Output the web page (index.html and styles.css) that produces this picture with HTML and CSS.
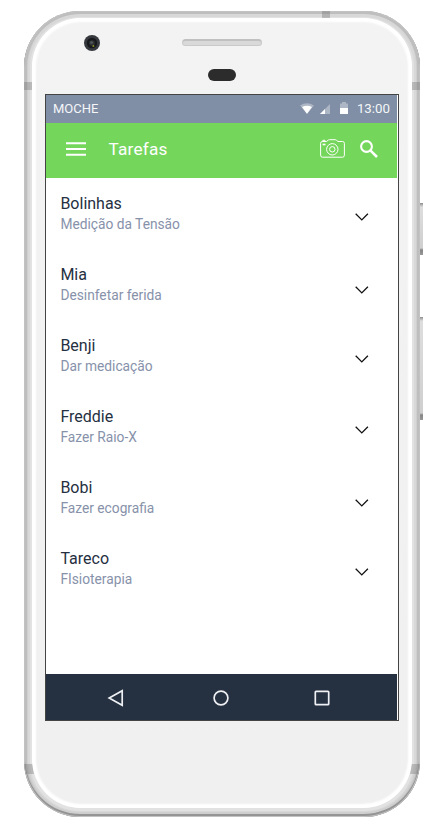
FILE: index.html
```html
<!DOCTYPE html>
<html lang="pt">
<head>
<meta charset="utf-8">
<title>Tarefas</title>
<link rel="stylesheet" href="styles.css">
</head>
<body>
<div class="phone">
  <i class="key key-power"></i><i class="key key-volume"></i>
  <i class="band band-top"></i><i class="band band-tl"></i><i class="band band-tr"></i><i class="band band-bl"></i><i class="band band-br"></i>
  <div class="face">
    <div class="hardware">
      <svg class="lens" viewBox="0 0 16 16"><circle cx="8" cy="8" r="8" fill="#35393d"/><circle cx="8" cy="8" r="5.2" fill="#17191c"/><circle cx="8" cy="8" r="2.8" fill="#303435"/><circle cx="7.5" cy="7.5" r="1.3" fill="#555b5f"/><circle cx="9.4" cy="11" r="1" fill="#858b27"/></svg>
      <i class="speaker"></i>
      <i class="sensor"></i>
    </div>
    <div class="screen">
      <div class="status">
        <span class="carrier">MOCHE</span>
        <svg class="wifi" viewBox="0 0 14 11"><path d="M0 2.6Q7-2 14 2.6L7 11Z" fill="#fff" opacity=".35"/><path d="M2 4.1Q7 1.4 12 4.1L7 10.8Z" fill="#fff"/></svg>
        <svg class="signal" viewBox="0 0 10 10"><path d="M10 0V10H0Z" fill="#fff" opacity=".35"/><path d="M5 5V10H0Z" fill="#fff"/></svg>
        <svg class="battery" viewBox="0 0 8 12"><path d="M0 1.4H2V0H6V1.4H8V6H0Z" fill="#fff" opacity=".35"/><path d="M0 6H8V12H0Z" fill="#fff"/></svg>
        <span class="time">13:00</span>
      </div>
      <header class="bar">
        <svg class="menu" viewBox="0 0 20 14"><path d="M0 1.2H20M0 7H20M0 12.8H20" stroke="#fff" stroke-width="2.1"/></svg>
        <h1>Tarefas</h1>
        <svg class="camera" viewBox="0 0 25 19" fill="none" stroke="#fff"><path d="M2.5 2.5H6.5L8.2 1.2Q8.8.7 9.6.7H15Q15.8.7 16.4 1.2L18 2.5H22.5Q24.4 2.5 24.4 4.4V16.2Q24.4 18.2 22.5 18.2H2.5Q.6 18.2.6 16.2V4.4Q.6 2.5 2.5 2.5ZM2.8 2.4V1.3H5V2.4"/><circle cx="12.3" cy="10.3" r="5.7"/><circle cx="12.3" cy="10.3" r="2.7"/><path d="M2.6 5.5H5.5" stroke-width="1.6"/></svg>
        <svg class="search" viewBox="0 0 18 18" fill="none" stroke="#fff"><circle cx="6.5" cy="6.5" r="5.4" stroke-width="2.1"/><path d="M10.6 10.6L17 17" stroke-width="2.5"/></svg>
      </header>
      <ul class="tasks">
        <li><div><h2>Bolinhas</h2><p>Medição da Tensão</p></div><svg class="chevron" viewBox="0 0 14 8"><path d="M.7.7L6.8 6.9L12.9.7"/></svg></li>
        <li><div><h2>Mia</h2><p>Desinfetar ferida</p></div><svg class="chevron low" viewBox="0 0 14 8"><path d="M.7.7L6.8 6.9L12.9.7"/></svg></li>
        <li><div><h2>Benji</h2><p>Dar medicação</p></div><svg class="chevron" viewBox="0 0 14 8"><path d="M.7.7L6.8 6.9L12.9.7"/></svg></li>
        <li><div><h2>Freddie</h2><p>Fazer Raio-X</p></div><svg class="chevron" viewBox="0 0 14 8"><path d="M.7.7L6.8 6.9L12.9.7"/></svg></li>
        <li><div><h2>Bobi</h2><p>Fazer ecografia</p></div><svg class="chevron low" viewBox="0 0 14 8"><path d="M.7.7L6.8 6.9L12.9.7"/></svg></li>
        <li><div><h2>Tareco</h2><p>FIsioterapia</p></div><svg class="chevron" viewBox="0 0 14 8"><path d="M.7.7L6.8 6.9L12.9.7"/></svg></li>
      </ul>
      <nav class="nav">
        <svg viewBox="0 0 18 18"><path d="M15.2 1.8V16.2L2.2 9Z"/></svg>
        <svg class="home" viewBox="0 0 18 18"><circle cx="9" cy="9" r="6.9"/></svg>
        <svg viewBox="0 0 18 18"><rect x="2.3" y="2.3" width="13.4" height="13.4" rx=".8"/></svg>
      </nav>
    </div>
  </div>
</div>
</body>
</html>
```
FILE: styles.css
```css
* { box-sizing: border-box; }
body {
  margin: 0;
  height: 827px;
  padding: 11px 13px 0 24px;
  overflow: hidden;
  background: #fff;
  font-family: Roboto, sans-serif;
}
h1, h2, p, ul { margin: 0; padding: 0; font-weight: 400; }
svg { display: block; flex: none; }

.phone {
  position: relative;
  width: 396px;
  height: 806px;
  padding: 7px 8px 9px;
  border-radius: 56px;
  background: #e2e2e2;
  box-shadow: inset 0 0 0 1px #c2c2c2, inset 0 -2px 0 1px #949494, inset 0 0 0 3px #bebebe, inset 0 -1px 0 4px #cfcfcf, inset 0 0 0 6px #d8d8d8;
}
.face {
  height: 790px;
  padding: 0 13px;
  border-radius: 49px;
  background: linear-gradient(#f3f3f3, #f0f0f0);
  box-shadow: inset 0 0 2px 4px #fff;
}
.band { position: absolute; background: rgba(110, 110, 110, .35); width: 8px; height: 8px; }
.band-top { left: 298px; top: 0; height: 7px; }
.band-tl { left: 0; top: 71px; }
.band-tr { right: 0; top: 71px; }
.band-bl { left: 1px; top: 753px; width: 8px; height: 10px; transform: skewX(10deg); }
.band-br { right: 1px; top: 753px; width: 8px; height: 10px; transform: skewX(-10deg); }
.key {
  position: absolute;
  left: 396px;
  width: 3px;
  background: linear-gradient(#8d8d8d, #dedede 4px, #cfcfcf calc(100% - 7px), #858585 calc(100% - 5px), #999);
}
.key-power { top: 192px; height: 52px; }
.key-volume { top: 306px; height: 103px; }

.hardware {
  display: grid;
  grid-template-columns: 98px 80px;
  grid-template-rows: 33px 12px;
  height: 76px;
  padding: 17px 0 0 39px;
  row-gap: 6px;
}
.lens { width: 16px; height: 16px; }
.speaker {
  width: 80px;
  height: 7px;
  margin-top: 4px;
  border: 1px solid #cacaca;
  border-top: 2px solid #c0c0c0;
  border-radius: 4px;
  background: #d9d9d9;
}
.sensor {
  grid-column: 2;
  width: 28px;
  height: 12px;
  margin: -5px 0 0 26px;
  border-radius: 6px;
  background: #2c2c2c;
}
.screen {
  width: 354px;
  height: 627px;
  display: flex;
  flex-direction: column;
  padding-right: 1px;
  border: 1px solid #444;
  background: #fff;
}
.status {
  height: 28px;
  display: flex;
  align-items: center;
  padding: 0 7px 2px;
  background: #808fa5;
  color: #f4f6f9;
  font-size: 13px;
}
.carrier { margin-right: auto; }
.wifi { width: 14px; height: 11px; margin-right: 6px; }
.signal { width: 10px; height: 10px; margin: 1px 10px 0 0; }
.battery { width: 8px; height: 12px; margin-right: 9px; }
.time { font-size: 13.3px; }
.bar {
  height: 55px;
  display: flex;
  align-items: center;
  padding: 0 19px 4px 20px;
  background: #75d65c;
  color: #fff;
}
.menu { width: 20px; height: 14px; margin-top: 1px; }
.bar h1 { margin: 0 auto 0 22.5px; font-size: 17.2px; letter-spacing: .2px; }
.camera { width: 25px; height: 19px; margin-right: 15px; }
.search { width: 18px; height: 18px; }
.tasks { flex: 1; padding-top: 15px; list-style: none; }
.tasks li {
  height: 71px;
  display: flex;
  justify-content: space-between;
  padding: 0 28px 0 14.4px;
}
.tasks h2 { font-size: 16px; line-height: 21px; color: #253041; }
.tasks p { font-size: 13.75px; line-height: 21px; color: #8792aa; }
.chevron { width: 14px; height: 8px; margin-top: 20.3px; }
.chevron.low { margin-top: 22.3px; }
.chevron path { fill: none; stroke: #111; stroke-width: 1.3; }
.nav {
  height: 46px;
  display: flex;
  align-items: center;
  justify-content: space-between;
  padding: 1px 66px 0 61px;
  background: #253040;
}
.nav svg { width: 18px; height: 18px; }
.nav .home { margin-left: 4px; }
.nav svg * { fill: none; stroke: #eef0f3; stroke-width: 1.7; }
```
